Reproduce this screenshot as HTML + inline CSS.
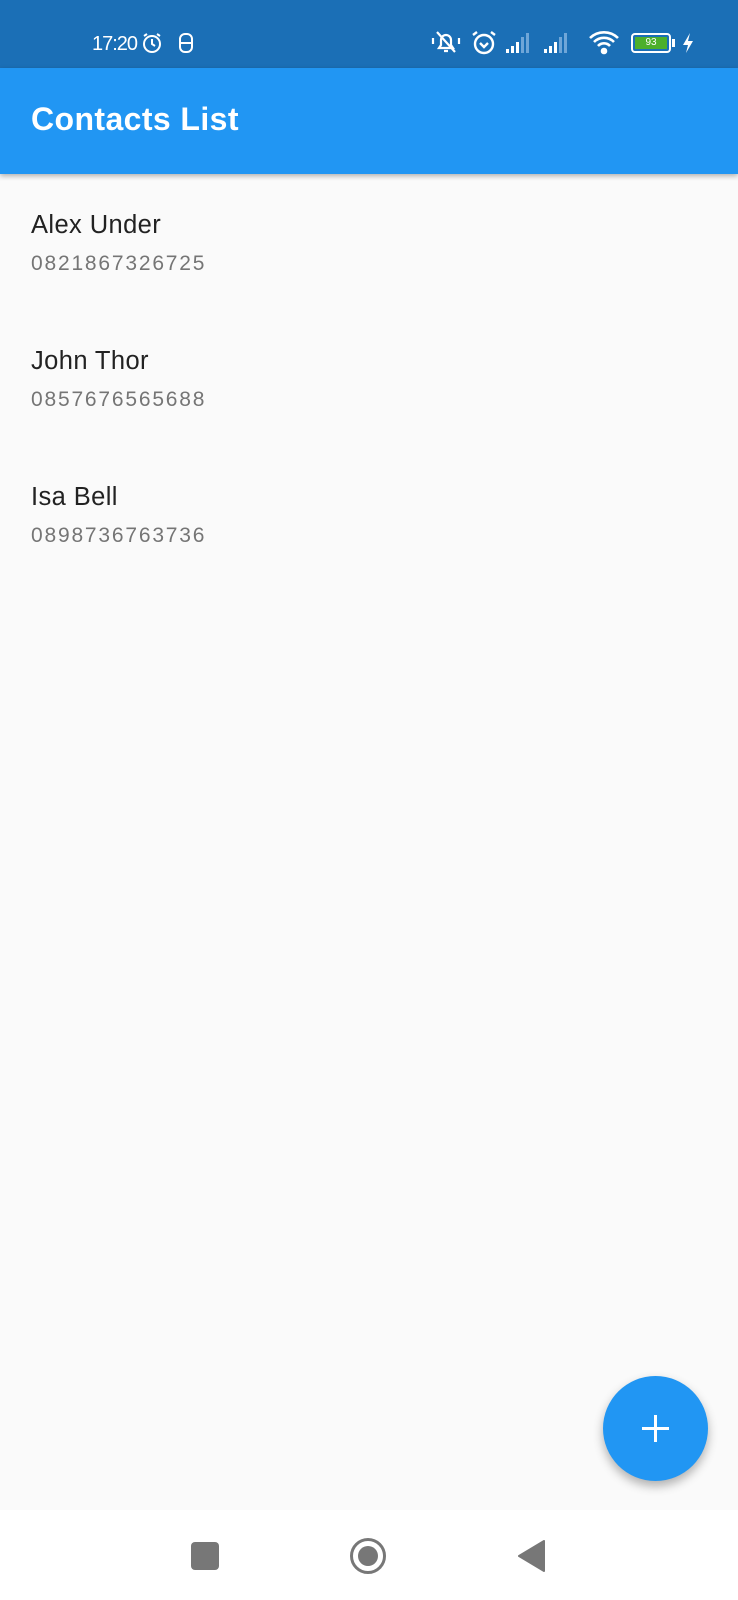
<!DOCTYPE html>
<html><head><meta charset="utf-8"><style>
*{margin:0;padding:0;box-sizing:border-box}
body{width:738px;height:1600px;background:#fafafa;font-family:"Liberation Sans",Roboto,sans-serif;position:relative;overflow:hidden}
.sb{position:absolute;left:0;top:0;width:738px;height:68px;background:#1b6fb6;color:#fff}
.ab{position:absolute;left:0;top:68px;width:738px;height:106px;background:#2196f3;box-shadow:0 2px 5px rgba(0,0,0,.3)}
.ab h1{position:absolute;left:31px;top:33px;font-size:32px;font-weight:bold;color:#fff;letter-spacing:.4px}
.it{position:absolute;left:31px}
.n{font-size:25.5px;color:#222;letter-spacing:.4px}
.p{font-size:21px;color:#757575;margin-top:12px;letter-spacing:1.8px}
.fab{position:absolute;left:603px;top:1376px;width:105px;height:105px;border-radius:50%;background:#2196f3;box-shadow:0 5px 10px rgba(0,0,0,.3)}
.nav{position:absolute;left:0;top:1510px;width:738px;height:90px;background:#fff}
</style></head><body>
<div class="sb">
<span style="position:absolute;left:92px;top:33px;font-size:20px;letter-spacing:-1px">17:20</span>
<svg style="position:absolute;left:141px;top:32px" width="22" height="22" viewBox="0 0 22 22" fill="none" stroke="#fff" stroke-width="2"><circle cx="11" cy="12" r="8"/><path d="M11 7v5l3 2M3 4l3-2M19 4l-3-2"/></svg>
<svg style="position:absolute;left:178px;top:32px" width="16" height="22" viewBox="0 0 16 22" fill="none" stroke="#fff" stroke-width="2"><rect x="2" y="2" width="12" height="18" rx="5"/><path d="M2 11h12"/></svg>
<svg style="position:absolute;left:430px;top:30px" width="32" height="26" viewBox="0 0 32 26" fill="none" stroke="#fff" stroke-width="2.2"><path d="M9 18h14l-2-3v-5a5 5 0 0 0-10 0v5zM14 21h4M7 2l18 20M3 8v6M29 8v6"/></svg>
<svg style="position:absolute;left:470px;top:29px" width="28" height="28" viewBox="0 0 28 28" fill="none" stroke="#fff" stroke-width="2.4"><circle cx="14" cy="15" r="9"/><path d="M3 6l4-3M25 6l-4-3M10 14l4 4 4-4"/></svg>
<svg style="position:absolute;left:506px;top:32px" width="74" height="22" viewBox="0 0 74 22"><g fill="#fff"><rect x="0" y="17" width="3" height="4"/><rect x="5" y="14" width="3" height="7"/><rect x="10" y="10" width="3" height="11"/><rect x="38" y="17" width="3" height="4"/><rect x="43" y="14" width="3" height="7"/><rect x="48" y="10" width="3" height="11"/></g><g fill="#6fa6d8"><rect x="15" y="5" width="3" height="16"/><rect x="20" y="1" width="3" height="20"/><rect x="53" y="5" width="3" height="16"/><rect x="58" y="1" width="3" height="20"/></g></svg>
<svg style="position:absolute;left:588px;top:30px" width="32" height="26" viewBox="0 0 32 26" fill="none" stroke="#fff" stroke-width="2.6"><path d="M2 8a20 20 0 0 1 28 0M6 12a14 14 0 0 1 20 0M10 16a8 8 0 0 1 12 0"/><circle cx="16" cy="21" r="2" fill="#fff"/></svg>
<div style="position:absolute;left:631px;top:33px;width:40px;height:20px;border:2px solid #fff;border-radius:4px;padding:2px"><div style="width:100%;height:100%;background:#4caf2b;color:#fff;font-size:10px;text-align:center;line-height:12px">93</div></div>
<div style="position:absolute;left:672px;top:39px;width:3px;height:8px;background:#fff"></div>
<svg style="position:absolute;left:682px;top:32px" width="12" height="22" viewBox="0 0 12 22"><path d="M8 1L1 13h5l-2 8 7-12H6z" fill="#fff"/></svg>
</div>
<div class="ab"><h1>Contacts List</h1></div>
<div class="it" style="top:211px"><div class="n">Alex Under</div><div class="p">0821867326725</div></div>
<div class="it" style="top:347px"><div class="n">John Thor</div><div class="p">0857676565688</div></div>
<div class="it" style="top:483px"><div class="n">Isa Bell</div><div class="p">0898736763736</div></div>
<div class="fab"><svg width="105" height="105" viewBox="0 0 105 105"><path d="M52.5 39v27M39 52.5h27" stroke="#fff" stroke-width="3"/></svg></div>
<div class="nav">
<div style="position:absolute;left:191px;top:32px;width:28px;height:28px;border-radius:4px;background:#777"></div>
<svg style="position:absolute;left:349px;top:27px" width="38" height="38" viewBox="0 0 38 38"><circle cx="19" cy="19" r="16.5" fill="none" stroke="#777" stroke-width="3"/><circle cx="19" cy="19" r="10" fill="#777"/></svg>
<svg style="position:absolute;left:518px;top:30px" width="28" height="32" viewBox="0 0 28 32"><path d="M26 1v30L1 16z" fill="#777" stroke="#777" stroke-linejoin="round" stroke-width="2"/></svg>
</div>
</body></html>
